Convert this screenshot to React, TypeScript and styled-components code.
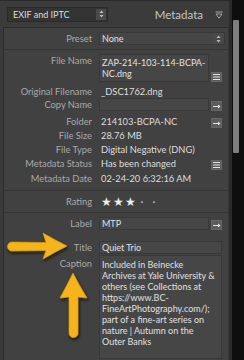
import styled, { createGlobalStyle } from "styled-components";

const GlobalStyle = createGlobalStyle`
  body {
    margin: 0;
    background: #0b0b0b;
    font-family: "Lato", "Open Sans", sans-serif;
  }
`;

const captionLines = [
  "Included in Beinecke",
  "Archives at Yale University &",
  "others (see Collections at",
  "https://www.BC-",
  "FineArtPhotography.com/);",
  "part of a fine-art series on",
  "nature | Autumn on the",
  "Outer Banks",
];

const ListIcon = () => (
  <svg width="7" height="6" viewBox="0 0 7 6">
    <path d="M0 0.5h7M0 3h7M0 5.5h7" stroke="#e4e4e4" strokeWidth="1" />
  </svg>
);

const ArrowIcon = () => (
  <svg width="8" height="5" viewBox="0 0 8 5">
    <path d="M0 2.5h6.5" stroke="#e4e4e4" strokeWidth="1" />
    <path d="M5 0.5L7.5 2.5L5 4.5Z" fill="#e4e4e4" />
  </svg>
);

const UpDown = () => (
  <svg width="5" height="8" viewBox="0 0 5 8">
    <path d="M2.5 0.5L4.5 3H0.5Z M2.5 7.5L4.5 5H0.5Z" fill="#bdbdbd" />
  </svg>
);

const App: React.FC = () => {
  return (
    <>
      <GlobalStyle />
      <Page>
        <Panel>
          <Header>
            <Dropdown>
              <span>EXIF and IPTC</span>
              <DropArrow>
                <UpDown />
              </DropArrow>
            </Dropdown>
            <HeaderTitle>
              Metadata
              <svg width="8" height="8" viewBox="0 0 8 8">
                <path d="M0.5 1h7" stroke="#a9a9a9" strokeWidth="1" />
                <path d="M1 3h6L4 7.2Z" fill="none" stroke="#a9a9a9" strokeWidth="0.9" />
              </svg>
            </HeaderTitle>
          </Header>
          <Body>
            <Row>
              <Label>Preset</Label>
              <Field $wide>
                <span>None</span>
                <DropArrow>
                  <UpDown />
                </DropArrow>
              </Field>
            </Row>
            <Divider />
            <Row>
              <Label>File Name</Label>
              <FieldWrap>
                <Field $pad={2}>
                  <div>ZAP-214-103-114-BCPA-</div>
                  <div>NC.dng</div>
                </Field>
                <Button>
                  <ListIcon />
                </Button>
              </FieldWrap>
            </Row>
            <Row $mt={3}>
              <Label>Original Filename</Label>
              <Value>_DSC1762.dng</Value>
            </Row>
            <Row>
              <Label>Copy Name</Label>
              <FieldWrap>
                <Field />
                <Button>
                  <ArrowIcon />
                </Button>
              </FieldWrap>
            </Row>
            <Row $mt={4}>
              <Label>Folder</Label>
              <FieldWrap>
                <Value>214103-BCPA-NC</Value>
                <Button>
                  <ArrowIcon />
                </Button>
              </FieldWrap>
            </Row>
            <Row $mt={1}>
              <Label>File Size</Label>
              <Value>28.76 MB</Value>
            </Row>
            <Row $mt={1}>
              <Label>File Type</Label>
              <Value>Digital Negative (DNG)</Value>
            </Row>
            <Row $mt={1}>
              <Label>Metadata Status</Label>
              <FieldWrap>
                <Value>Has been changed</Value>
                <Button>
                  <ListIcon />
                </Button>
              </FieldWrap>
            </Row>
            <Row $mt={2}>
              <Label>Metadata Date</Label>
              <Value>02-24-20 6:32:16 AM</Value>
            </Row>
            <Divider $mt={5} />
            <Row $mt={0}>
              <Label>Rating</Label>
              <Stars>
                <span>★</span>
                <span>★</span>
                <span>★</span>
                <Dot>·</Dot>
                <Dot>·</Dot>
              </Stars>
            </Row>
            <Divider $mt={4} />
            <Row>
              <Label>Label</Label>
              <FieldWrap>
                <Field>MTP</Field>
                <Button>
                  <ArrowIcon />
                </Button>
              </FieldWrap>
            </Row>
            <Row $mt={11}>
              <Label>Title</Label>
              <Field>Quiet Trio</Field>
            </Row>
            <Row $mt={1}>
              <Label $pt={2}>Caption</Label>
              <Field $pad={3} $minH={96}>
                {captionLines.map((line, i) => (
                  <div key={i}>{line}</div>
                ))}
              </Field>
            </Row>
          </Body>
        </Panel>
        <Scroll>
          <Thumb />
        </Scroll>
        <Callouts width="100" height="120" viewBox="0 225 100 120">
          <defs>
            <filter id="sh" x="-20%" y="-20%" width="150%" height="150%">
              <feDropShadow dx="1" dy="2" stdDeviation="1.4" floodColor="#111" floodOpacity="0.8" />
            </filter>
          </defs>
          <g filter="url(#sh)" fill="#f5b31c" stroke="#d99a0c" strokeWidth="0.6">
            <path d="M12 242 L46 242.5 L43 233 Q55 240 67 246 Q55 252 43 259 L46 250.5 L12 251 A4.5 4.5 0 0 1 12 242 Z" />
            <path d="M69 333 L69 297 L60 298 Q67 285 73 273 Q79 285 87 298 L78 297 L78 333 A4.5 4.5 0 0 1 69 333 Z" />
          </g>
        </Callouts>
      </Page>
    </>
  );
};

export default App;

const Page = styled.div`
  position: relative;
  display: flex;
  width: 244px;
  height: 360px;
  overflow: hidden;
`;

const Panel = styled.div`
  width: 229px;
  display: flex;
  flex-direction: column;
  background: #3b3b3b;
`;

const Header = styled.div`
  height: 27px;
  display: flex;
  align-items: center;
  justify-content: space-between;
  padding: 0 6px 0 7px;
  border-top: 1px solid #2a2a2a;
  box-sizing: border-box;
`;

const Dropdown = styled.div`
  width: 101px;
  height: 15px;
  box-sizing: border-box;
  display: flex;
  align-items: center;
  justify-content: space-between;
  padding: 0 1px 0 5px;
  background: #333333;
  border: 1px solid #2a2a2a;
  font-size: 9px;
  color: #dddddd;
`;

const DropArrow = styled.div`
  width: 10px;
  height: 11px;
  display: flex;
  align-items: center;
  justify-content: center;
  background: #4a4a4a;
`;

const HeaderTitle = styled.div`
  display: flex;
  align-items: center;
  gap: 12px;
  font-size: 11.5px;
  color: #c4c4c4;
  padding-top: 1px;
`;

const Body = styled.div`
  flex: 1;
  margin-left: 3px;
  padding-top: 4px;
  background: #414141;
  border-left: 1px solid #2c2c2c;
  border-top: 1px solid #2c2c2c;
  border-right: 1px solid #363636;
`;

const Row = styled.div<{ $mt?: number }>`
  display: grid;
  grid-template-columns: 88px 1fr;
  column-gap: 7px;
  padding-right: 6px;
  margin-top: ${(p) => p.$mt ?? 0}px;
  align-items: start;
`;

const Label = styled.div<{ $pt?: number }>`
  text-align: right;
  font-size: 9.3px;
  line-height: 13px;
  color: #a9a9a9;
  white-space: nowrap;
  padding-top: ${(p) => p.$pt ?? 0}px;
`;

const Value = styled.div`
  flex: 1;
  font-size: 9.3px;
  line-height: 13px;
  color: #dedede;
  padding-left: 2px;
  white-space: nowrap;
`;

const FieldWrap = styled.div`
  display: flex;
  align-items: flex-end;
  gap: 2px;
`;

const Field = styled.div<{ $pad?: number; $minH?: number; $wide?: boolean }>`
  flex: 1;
  display: ${(p) => (p.$wide ? "flex" : "block")};
  align-items: center;
  justify-content: space-between;
  min-height: ${(p) => p.$minH ?? 11}px;
  padding: ${(p) => p.$pad ?? 0}px 1px ${(p) => p.$pad ?? 0}px 2px;
  margin-right: ${(p) => (p.$wide ? -3 : 0)}px;
  background: #464646;
  border: 1px solid #393939;
  font-size: 9px;
  line-height: 11px;
  color: #e0e0e0;
  white-space: nowrap;
`;

const Button = styled.div`
  width: 11px;
  height: 10px;
  flex: none;
  display: flex;
  align-items: center;
  justify-content: center;
  background: #5c5c5c;
  border: 1px solid #666666;
  box-sizing: border-box;
`;

const Divider = styled.div<{ $mt?: number }>`
  height: 1px;
  background: #353535;
  margin: ${(p) => p.$mt ?? 4}px 0 4px;
`;

const Stars = styled.div`
  display: flex;
  align-items: center;
  height: 13px;
  padding-left: 1px;
  font-size: 11.5px;
  color: #ededed;
  span {
    width: 12px;
    text-align: center;
  }
`;

const Dot = styled.span`
  font-size: 11px;
  color: #c4c4c4;
`;

const Scroll = styled.div`
  flex: 1;
  background: #0e0e0e;
  border-left: 3px solid #2a2a2a;
  padding-left: 1px;
`;

const Thumb = styled.div`
  width: 6px;
  height: 133px;
  margin-top: 20px;
  background: #7d7d7d;
  border-radius: 1px;
`;

const Callouts = styled.svg`
  position: absolute;
  left: 0;
  top: 225px;
  pointer-events: none;
`;
